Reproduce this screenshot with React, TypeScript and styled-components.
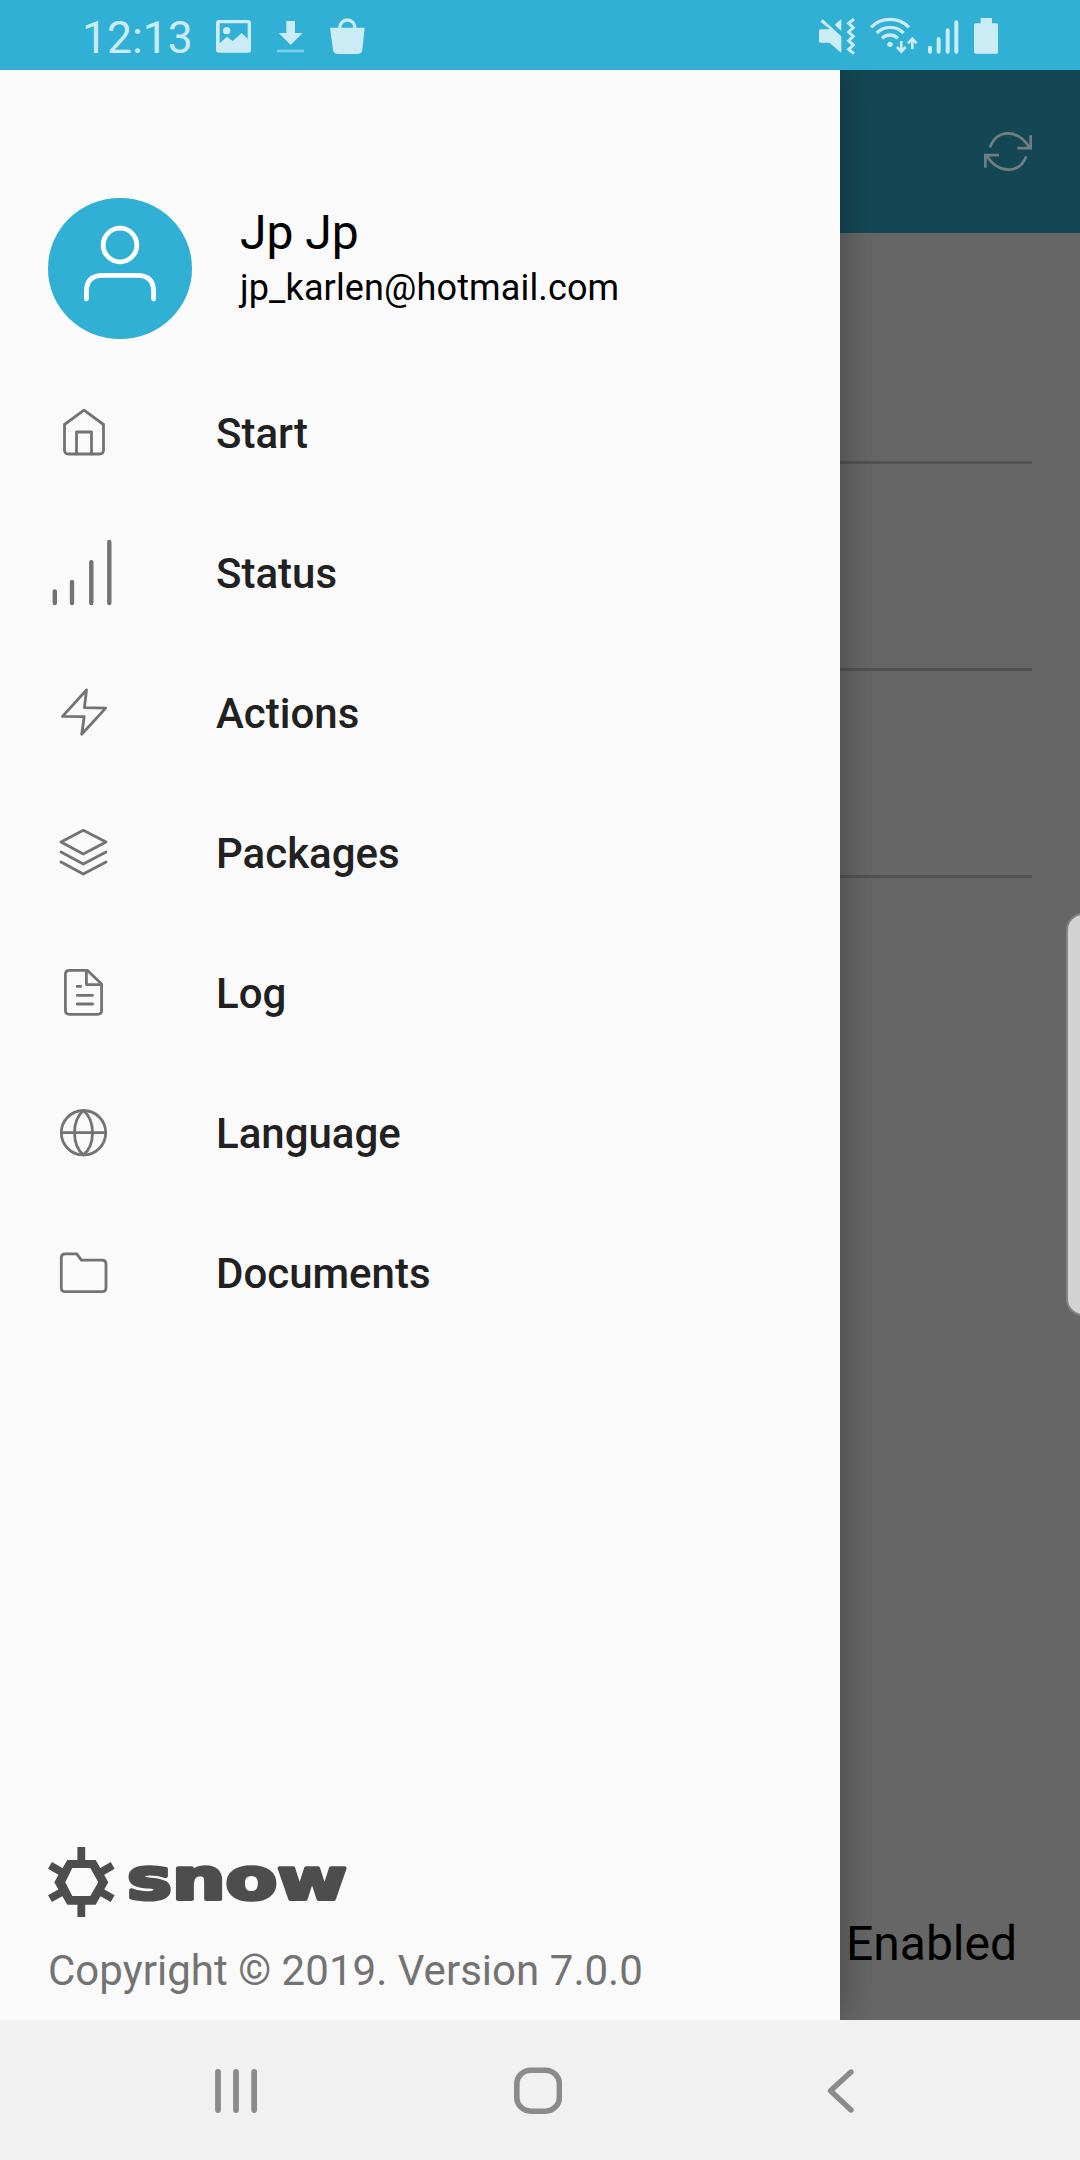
import React from "react";
import styled, { createGlobalStyle } from "styled-components";

const GlobalStyle = createGlobalStyle`
  html, body { margin: 0; padding: 0; }
  body { font-family: Roboto, "Noto Sans", sans-serif; -webkit-font-smoothing: antialiased; }
`;

const Phone = styled.div`
  position: relative;
  width: 1080px;
  height: 2160px;
  display: flex;
  flex-direction: column;
  overflow: hidden;
  background: #fafafa;
`;

const StatusBar = styled.header`
  display: flex;
  justify-content: space-between;
  height: 70px;
  flex: none;
  box-sizing: border-box;
  padding: 0 82px 0 82px;
  background: #30b0d5;
  color: #cbebf5;
  svg { display: block; }
`;

const StatusGroup = styled.div<{ $gap: number }>`
  display: flex;
  align-items: flex-start;
  gap: ${(p) => p.$gap}px;
`;

const Clock = styled.span`
  width: 108px;
  font-size: 44.5px;
  line-height: 70px;
  padding-top: 3px;
  white-space: nowrap;
`;

const Body = styled.main`
  display: flex;
  height: 1950px;
  flex: none;
  overflow: hidden;
`;

const Drawer = styled.nav`
  position: relative;
  z-index: 1;
  width: 840px;
  flex: none;
  box-sizing: border-box;
  padding: 128px 48px 0;
  display: flex;
  flex-direction: column;
  background: #fafafa;
  box-shadow: 0 0 36px rgba(0, 0, 0, 0.32);
`;

const Profile = styled.div`
  display: flex;
  gap: 48px;
  height: 165px;
  flex: none;
`;

const Avatar = styled.div`
  width: 144px;
  height: 140.5px;
  border-radius: 50%;
  background: #30b0d5;
  svg { display: block; }
`;

const Identity = styled.div`
  display: flex;
  flex-direction: column;
  padding-top: 7px;
  color: #000;
`;

const Name = styled.div`
  font-size: 48px;
  line-height: 56px;
`;

const Email = styled.div`
  font-size: 36px;
  line-height: 54px;
  letter-spacing: 0.14px;
`;

const Menu = styled.ul`
  list-style: none;
  margin: 0;
  padding: 0;
`;

const MenuItem = styled.li`
  display: flex;
  align-items: center;
  gap: 96px;
  height: 140px;
`;

const MenuLabel = styled.span`
  padding-top: 2px;
  color: #212121;
  font-size: 42px;
  font-weight: 500;
  line-height: 50px;
`;

const MenuIcon = styled.svg`
  width: 72px;
  height: 72px;
  flex: none;
  fill: none;
  stroke: #737373;
  stroke-width: 2.8;
  stroke-linecap: round;
  stroke-linejoin: round;
`;

const Footer = styled.footer`
  margin-top: auto;
  padding-bottom: 24px;
`;

const Logo = styled.svg`
  display: block;
  width: 304px;
  height: 70px;
  overflow: visible;
  fill: #4d4d4d;
`;

const Copyright = styled.div`
  margin-top: 29px;
  font-size: 42px;
  line-height: 50px;
  letter-spacing: 0.03px;
  color: #737373;
  white-space: nowrap;
`;

const DimmedPage = styled.section`
  flex: 1;
  display: flex;
  flex-direction: column;
  background: #666;
`;

const PageHeader = styled.div`
  height: 163px;
  box-sizing: border-box;
  padding-right: 48px;
  display: flex;
  align-items: center;
  justify-content: flex-end;
  background: #144754;
`;

const Field = styled.div<{ $height: number }>`
  height: ${(p) => p.$height}px;
  box-sizing: border-box;
  margin-right: 48px;
  border-bottom: 3px solid #525252;
`;

const State = styled.div`
  margin-top: auto;
  padding: 0 0 48px 6px;
  font-size: 48px;
  line-height: 56px;
  color: #000;
`;

const EdgeHandle = styled.div`
  position: absolute;
  z-index: 2;
  top: 913px;
  right: -20px;
  width: 34px;
  height: 403px;
  box-sizing: border-box;
  border: 2px solid #858585;
  border-radius: 18px;
  background: #d2d2d2;
`;

const NavBar = styled.div`
  display: flex;
  align-items: center;
  height: 140px;
  flex: none;
  box-sizing: border-box;
  padding: 2px 0 0 215px;
  background: #f1f1f1;
`;

const NavIcon = styled.svg<{ $before?: number }>`
  display: block;
  margin-left: ${(p) => p.$before ?? 0}px;
  fill: none;
  stroke: #8b8b8b;
  stroke-linecap: round;
  stroke-linejoin: round;
`;

const items = [
  {
    label: "Start",
    icon: (
      <>
        <path d="M36 13.2 16.5 27.5V53q0 4 4 4h31q4 0 4-4V27.5Z" />
        <path d="M28.5 57V35h15v22" />
      </>
    ),
  },
  {
    label: "Status",
    icon: <path strokeWidth="4.4" d="M6.8 54.5V66M24 45v21M43.3 25.2V66M61.3 4.9V66" />,
  },
  {
    label: "Actions",
    icon: <path d="M38.5 13 14.5 39.4 36.2 39.7 33.7 57.3 57.7 31.1 36.4 30.7Z" />,
  },
  {
    label: "Packages",
    icon: (
      <>
        <path d="M35.3 13.3 13 25l22.3 12L58 25Z" />
        <path d="m13 35 22.3 12L58 35M13 45l22.3 12L58 45" />
      </>
    ),
  },
  {
    label: "Log",
    icon: (
      <>
        <path d="M39.5 13.4H21.4q-4 0-4 4v35.9q0 4 4 4h28.2q4 0 4-4V27Z" />
        <path d="M38.4 13.6V27.6h15M29.2 29.4h3.6M29.2 38.3h15.4M29.2 47h15.4" />
      </>
    ),
  },
  {
    label: "Language",
    icon: (
      <>
        <circle cx="35.5" cy="35.7" r="22.2" />
        <path d="M13.3 35.7h44.4M35.5 13.5c-12 10-12 34.4 0 44.4M35.5 13.5c12 10 12 34.4 0 44.4" />
      </>
    ),
  },
  {
    label: "Documents",
    icon: <path d="M17.3 16.8h11.4l4.7 6.3H54q4 0 4 4v23.6q0 4-4 4H17.3q-4 0-4-4V20.8q0-4 4-4Z" />,
  },
];

export default function App() {
  return (
    <>
      <GlobalStyle />
      <Phone>
        <StatusBar>
          <StatusGroup $gap={26}>
            <Clock>12:13</Clock>
            <svg width="35" height="70" viewBox="468 0 105 210" fill="currentColor">
              <path
                fillRule="evenodd"
                d="M477 60h87q9 0 9 9v80q0 9-9 9h-87q-9 0-9-9V69q0-9 9-9Zm2 10v60l22-20 17 13 27-24 18 17V70Z"
              />
              <circle cx="500" cy="92" r="11" />
            </svg>
            <svg width="27.3" height="70" viewBox="650 0 82 210" fill="currentColor">
              <path d="M678 63h26v36h23l-36 36-36-36h23Z" />
              <path opacity="0.5" d="M650 149h82v8h-82Z" />
            </svg>
            <svg width="34.7" height="70" viewBox="812 0 104 210" fill="currentColor">
              <path d="M812 83h104l-7 66q-2 13-15 13h-58q-13 0-15-13Z" />
              <path d="M841 85a23 25 0 0 1 46 0" fill="none" stroke="currentColor" strokeWidth="10" />
            </svg>
          </StatusGroup>
          <StatusGroup $gap={0}>
            <svg width="51.3" height="70" viewBox="57 0 154 210" fill="currentColor">
              <path d="M62 88h28L61 65l7-7 56 51v50L88 128H62q-5 0-5-5V93q0-5 5-5ZM124 57v36L104 74Z" />
              <path
                d="m162 57-16 13 14 13-14 13 14 13-14 13 14 13-14 13 16 13"
                fill="none"
                stroke="currentColor"
                strokeWidth="9"
              />
            </svg>
            <svg width="57.3" height="70" viewBox="211 0 172 210" fill="none" stroke="currentColor" strokeWidth="10">
              <path d="M214 82a80 80 0 0 1 114 0M231 99a57 57 0 0 1 81 0M247 115a34 34 0 0 1 48 0" />
              <circle cx="271" cy="133" r="8" fill="currentColor" stroke="none" />
              <path d="M305 123v32m-13-14 13 14 13-14M338 148v-32m-13 14 13-14 13 14" strokeWidth="8" />
            </svg>
            <svg
              width="46"
              height="70"
              viewBox="383 0 138 210"
              fill="none"
              stroke="currentColor"
              strokeWidth="12"
              strokeLinecap="round"
            >
              <path d="M389 143v12M415 117v38M442 91v64M468 67v88" />
            </svg>
            <svg width="24.3" height="70" viewBox="521 0 73 210" fill="currentColor">
              <path d="M541 54h34v16h14q5 0 5 5v81q0 5-5 5h-63q-5 0-5-5V75q0-5 5-5h15Z" />
            </svg>
          </StatusGroup>
        </StatusBar>

        <Body>
          <Drawer>
            <Profile>
              <Avatar>
                <svg
                  width="144"
                  height="140"
                  viewBox="0 0 144 140"
                  fill="none"
                  stroke="#fff"
                  strokeWidth="4.8"
                  strokeLinecap="round"
                >
                  <circle cx="72" cy="47" r="16.8" />
                  <path d="M38.4 101V93.5Q38.4 77.4 55 77.4H89Q105.6 77.4 105.6 93.5V101" />
                </svg>
              </Avatar>
              <Identity>
                <Name>Jp Jp</Name>
                <Email>jp_karlen@hotmail.com</Email>
              </Identity>
            </Profile>
            <Menu>
              {items.map((item) => (
                <MenuItem key={item.label}>
                  <MenuIcon viewBox="0 0 72 72">{item.icon}</MenuIcon>
                  <MenuLabel>{item.label}</MenuLabel>
                </MenuItem>
              ))}
            </Menu>
            <Footer>
              <Logo viewBox="0 0 304 70">
                <path
                  fillRule="evenodd"
                  d="M6.3 35.3 19.3 13H47.7L60.3 35.3 47.7 57.7H19.3ZM17.3 35.3 24.3 49H42.3L50.3 35.3 42.3 21H24.3Z"
                />
                <path
                  d="M33.3 0V14M33.3 56V70M2 18.3 14.5 25.6M64.7 18.3 52.2 25.6M2 51.7 14.5 44.6M64.7 51.7 52.2 44.6"
                  stroke="#4d4d4d"
                  strokeWidth="7.8"
                />
                <text
                  x="79"
                  y="51.8"
                  fontFamily="DejaVu Sans, sans-serif"
                  fontWeight="700"
                  fontSize="57"
                  textLength="220"
                  lengthAdjust="spacingAndGlyphs"
                  stroke="#4d4d4d"
                  strokeWidth="3.6"
                  strokeLinejoin="round"
                >
                  snow
                </text>
              </Logo>
              <Copyright>Copyright © 2019. Version 7.0.0</Copyright>
            </Footer>
          </Drawer>

          <DimmedPage>
            <PageHeader>
              <svg width="48" height="39" viewBox="492 217 144 116" fill="none" stroke="#727d82" strokeWidth="8">
                <path d="M510 262C532 207 592 207 628 262M619 289C598 343 535 343 500 288" />
                <path d="M632 226v39h-40M496 324v-38h41" />
              </svg>
            </PageHeader>
            <Field $height={231} />
            <Field $height={207} />
            <Field $height={207} />
            <State>Enabled</State>
          </DimmedPage>
        </Body>

        <NavBar>
          <NavIcon width="42" height="46" viewBox="0 0 42 46" strokeWidth="5.8">
            <path d="M3 4V42M21 4V42M39.2 4V42" />
          </NavIcon>
          <NavIcon $before={257} width="48" height="48" viewBox="0 0 48 48" strokeWidth="5.6">
            <rect x="2.8" y="3.2" width="42.6" height="41" rx="14" />
          </NavIcon>
          <NavIcon $before={265} width="27" height="46" viewBox="0 0 27 46" strokeWidth="5.4">
            <path d="M24 4 3.5 22.7 24 42" />
          </NavIcon>
        </NavBar>

        <EdgeHandle />
      </Phone>
    </>
  );
}
